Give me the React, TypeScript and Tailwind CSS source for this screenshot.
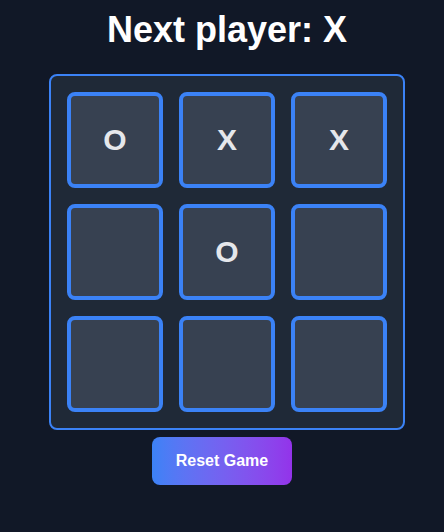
import React, { useState } from 'react';

type Cell = 'X' | 'O' | null;

const initial: Cell[] = ['O', 'X', 'X', null, 'O', null, null, null, null];

export default function App() {
  const [board, setBoard] = useState<Cell[]>(initial);
  const [xNext, setXNext] = useState(true);

  const play = (i: number) => {
    if (board[i]) return;
    const next = board.slice();
    next[i] = xNext ? 'X' : 'O';
    setBoard(next);
    setXNext(!xNext);
  };

  const reset = () => {
    setBoard(Array(9).fill(null));
    setXNext(true);
  };

  return (
    <div
      className="min-h-screen bg-[#111827] flex flex-col items-center pt-[10px]"
      style={{ fontFamily: '"Liberation Sans", Arial, sans-serif' }}
    >
      <div className="flex flex-col items-center pl-[10px]">
        <h1 className="text-4xl font-bold text-white mb-6">Next player: {xNext ? 'X' : 'O'}</h1>

        {/* Board */}
        <div className="grid grid-cols-3 gap-4 p-4 bg-[#1f2937] border-2 border-[#3b82f6] rounded-lg">
          {board.map((c, i) => (
            <button
              key={i}
              onClick={() => play(i)}
              className="w-24 h-24 bg-[#374151] border-4 border-[#3b82f6] rounded-lg flex items-center justify-center text-3xl font-bold text-[#e5e7eb]"
            >
              {c}
            </button>
          ))}
        </div>
      </div>

      <button
        onClick={reset}
        className="mt-[7px] px-6 py-3 rounded-lg bg-gradient-to-r from-[#3b82f6] to-[#9333ea] text-white font-bold text-base"
      >
        Reset Game
      </button>
    </div>
  );
}
